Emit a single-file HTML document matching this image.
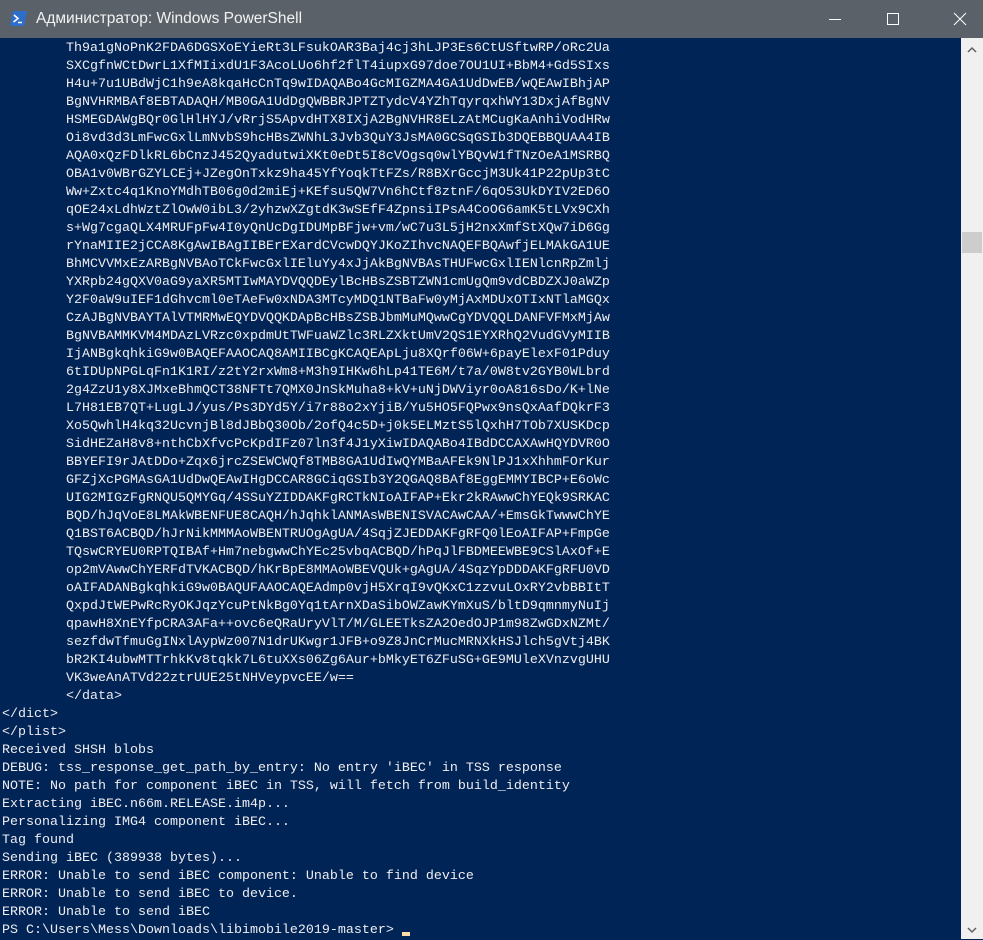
<!DOCTYPE html>
<html><head><meta charset="utf-8"><style>
body{margin:0;width:983px;height:939px;overflow:hidden;background:#012456;position:relative;font-family:"Liberation Sans",sans-serif}
#t{position:absolute;left:0;top:0;width:983px;height:38px;background:#5a6169;color:#fff;font-size:15.5px}
#t .ti{position:absolute;left:36px;top:10px;color:#f2f2f2}
#c{position:absolute;left:2px;top:40px;margin:0;font-family:"Liberation Mono",monospace;font-size:13.33px;line-height:18px;color:#eeedf0;white-space:pre}
#sb{position:absolute;left:961px;top:38px;width:22px;height:901px;background:#f0f0f0}
#th{position:absolute;left:1px;top:194px;width:20px;height:21px;background:#cdcdcd}
.cur{display:inline-block;width:8px;height:4px;background:#fedba9;vertical-align:-3px}
</style></head><body>
<div id="t">
<svg style="position:absolute;left:10px;top:11px" width="17" height="15"><path d="M3 0H17L14 15H0Z" fill="#2e6ecb"/><path d="M4 4L8 7.5L3.5 11" stroke="#fff" stroke-width="1.6" fill="none"/><path d="M8 11.5H12" stroke="#fff" stroke-width="1.5"/></svg>
<span class="ti">Администратор: Windows PowerShell</span>
<svg style="position:absolute;left:820px;top:10px" width="150" height="20"><path d="M9 9.5H21" stroke="#fff" stroke-width="1"/><rect x="67.5" y="3.5" width="11" height="11" stroke="#fff" fill="none"/><path d="M146 3L158 15M158 3L146 15" stroke="#fff" stroke-width="1" transform="translate(-12,0)"/></svg>
</div>
<pre id="c">        Th9a1gNoPnK2FDA6DGSXoEYieRt3LFsukOAR3Baj4cj3hLJP3Es6CtUSftwRP/oRc2Ua
        SXCgfnWCtDwrL1XfMIixdU1F3AcoLUo6hf2flT4iupxG97doe7OU1UI+BbM4+Gd5SIxs
        H4u+7u1UBdWjC1h9eA8kqaHcCnTq9wIDAQABo4GcMIGZMA4GA1UdDwEB/wQEAwIBhjAP
        BgNVHRMBAf8EBTADAQH/MB0GA1UdDgQWBBRJPTZTydcV4YZhTqyrqxhWY13DxjAfBgNV
        HSMEGDAWgBQr0GlHlHYJ/vRrjS5ApvdHTX8IXjA2BgNVHR8ELzAtMCugKaAnhiVodHRw
        Oi8vd3d3LmFwcGxlLmNvbS9hcHBsZWNhL3Jvb3QuY3JsMA0GCSqGSIb3DQEBBQUAA4IB
        AQA0xQzFDlkRL6bCnzJ452QyadutwiXKt0eDt5I8cVOgsq0wlYBQvW1fTNzOeA1MSRBQ
        OBA1v0WBrGZYLCEj+JZegOnTxkz9ha45YfYoqkTtFZs/R8BXrGccjM3Uk41P22pUp3tC
        Ww+Zxtc4q1KnoYMdhTB06g0d2miEj+KEfsu5QW7Vn6hCtf8ztnF/6qO53UkDYIV2ED6O
        qOE24xLdhWztZlOwW0ibL3/2yhzwXZgtdK3wSEfF4ZpnsiIPsA4CoOG6amK5tLVx9CXh
        s+Wg7cgaQLX4MRUFpFw4I0yQnUcDgIDUMpBFjw+vm/wC7u3L5jH2nxXmfStXQw7iD6Gg
        rYnaMIIE2jCCA8KgAwIBAgIIBErEXardCVcwDQYJKoZIhvcNAQEFBQAwfjELMAkGA1UE
        BhMCVVMxEzARBgNVBAoTCkFwcGxlIEluYy4xJjAkBgNVBAsTHUFwcGxlIENlcnRpZmlj
        YXRpb24gQXV0aG9yaXR5MTIwMAYDVQQDEylBcHBsZSBTZWN1cmUgQm9vdCBDZXJ0aWZp
        Y2F0aW9uIEF1dGhvcml0eTAeFw0xNDA3MTcyMDQ1NTBaFw0yMjAxMDUxOTIxNTlaMGQx
        CzAJBgNVBAYTAlVTMRMwEQYDVQQKDApBcHBsZSBJbmMuMQwwCgYDVQQLDANFVFMxMjAw
        BgNVBAMMKVM4MDAzLVRzc0xpdmUtTWFuaWZlc3RLZXktUmV2QS1EYXRhQ2VudGVyMIIB
        IjANBgkqhkiG9w0BAQEFAAOCAQ8AMIIBCgKCAQEApLju8XQrf06W+6payElexF01Pduy
        6tIDUpNPGLqFn1K1RI/z2tY2rxWm8+M3h9IHKw6hLp41TE6M/t7a/0W8tv2GYB0WLbrd
        2g4ZzU1y8XJMxeBhmQCT38NFTt7QMX0JnSkMuha8+kV+uNjDWViyr0oA816sDo/K+lNe
        L7H81EB7QT+LugLJ/yus/Ps3DYd5Y/i7r88o2xYjiB/Yu5HO5FQPwx9nsQxAafDQkrF3
        Xo5QwhlH4kq32UcvnjBl8dJBbQ30Ob/2ofQ4c5D+j0k5ELMztS5lQxhH7TOb7XUSKDcp
        SidHEZaH8v8+nthCbXfvcPcKpdIFz07ln3f4J1yXiwIDAQABo4IBdDCCAXAwHQYDVR0O
        BBYEFI9rJAtDDo+Zqx6jrcZSEWCWQf8TMB8GA1UdIwQYMBaAFEk9NlPJ1xXhhmFOrKur
        GFZjXcPGMAsGA1UdDwQEAwIHgDCCAR8GCiqGSIb3Y2QGAQ8BAf8EggEMMYIBCP+E6oWc
        UIG2MIGzFgRNQU5QMYGq/4SSuYZIDDAKFgRCTkNIoAIFAP+Ekr2kRAwwChYEQk9SRKAC
        BQD/hJqVoE8LMAkWBENFUE8CAQH/hJqhklANMAsWBENISVACAwCAA/+EmsGkTwwwChYE
        Q1BST6ACBQD/hJrNikMMMAoWBENTRUOgAgUA/4SqjZJEDDAKFgRFQ0lEoAIFAP+FmpGe
        TQswCRYEU0RPTQIBAf+Hm7nebgwwChYEc25vbqACBQD/hPqJlFBDMEEWBE9CSlAxOf+E
        op2mVAwwChYERFdTVKACBQD/hKrBpE8MMAoWBEVQUk+gAgUA/4SqzYpDDDAKFgRFU0VD
        oAIFADANBgkqhkiG9w0BAQUFAAOCAQEAdmp0vjH5XrqI9vQKxC1zzvuLOxRY2vbBBItT
        QxpdJtWEPwRcRyOKJqzYcuPtNkBg0Yq1tArnXDaSibOWZawKYmXuS/bltD9qmnmyNuIj
        qpawH8XnEYfpCRA3AFa++ovc6eQRaUryVlT/M/GLEETksZA2OedOJP1m98ZwGDxNZMt/
        sezfdwTfmuGgINxlAypWz007N1drUKwgr1JFB+o9Z8JnCrMucMRNXkHSJlch5gVtj4BK
        bR2KI4ubwMTTrhkKv8tqkk7L6tuXXs06Zg6Aur+bMkyET6ZFuSG+GE9MUleXVnzvgUHU
        VK3weAnATVd22ztrUUE25tNHVeypvcEE/w==
        &lt;/data&gt;
&lt;/dict&gt;
&lt;/plist&gt;
Received SHSH blobs
DEBUG: tss_response_get_path_by_entry: No entry 'iBEC' in TSS response
NOTE: No path for component iBEC in TSS, will fetch from build_identity
Extracting iBEC.n66m.RELEASE.im4p...
Personalizing IMG4 component iBEC...
Tag found
Sending iBEC (389938 bytes)...
ERROR: Unable to send iBEC component: Unable to find device
ERROR: Unable to send iBEC to device.
ERROR: Unable to send iBEC
PS C:\Users\Mess\Downloads\libimobile2019-master&gt; <span class="cur"></span></pre>
<div id="sb"><div id="th"></div>
<svg style="position:absolute;left:6px;top:8px" width="10" height="8"><path d="M1 6L5 2L9 6" stroke="#606060" stroke-width="1.5" fill="none"/></svg>
<svg style="position:absolute;left:6px;top:888px" width="10" height="8"><path d="M1 2L5 6L9 2" stroke="#606060" stroke-width="1.5" fill="none"/></svg>
</div>
</body></html>
